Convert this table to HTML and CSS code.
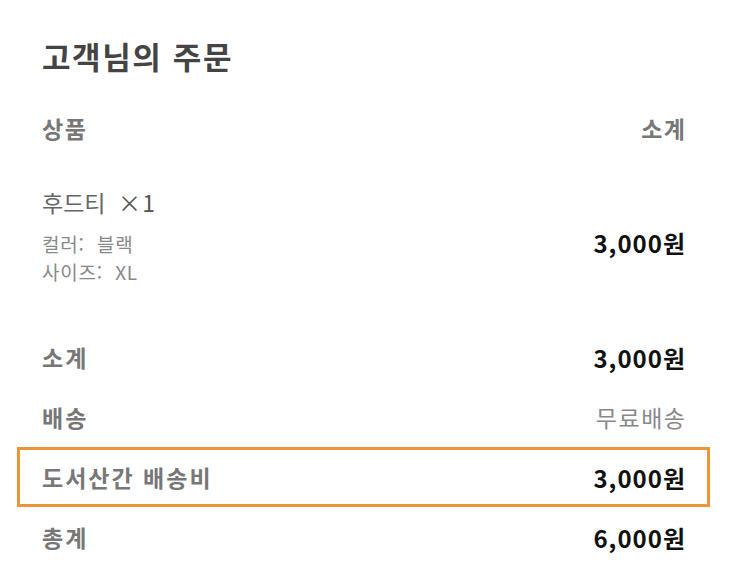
FILE: index.html
```html
<!DOCTYPE html>
<html lang="ko">
<head>
<meta charset="utf-8">
<title>고객님의 주문</title>
<link rel="stylesheet" href="styles.css">
</head>
<body>
<section class="order">
  <h1 class="order-title">고객님의 주문</h1>
  <div class="order-head">
    <span>상품</span>
    <span class="trail">소계</span>
  </div>
  <div class="order-item">
    <div class="item-info">
      <div class="item-name">후드티 <span class="item-qty">×&#8202;1</span></div>
      <div class="item-opts">
        <div>컬러:&nbsp; 블랙</div>
        <div>사이즈:&nbsp; XL</div>
      </div>
    </div>
    <div class="item-price trail-num">3,000원</div>
  </div>
  <div class="sum-row">
    <span class="sum-label">소계</span>
    <span class="sum-value trail-num">3,000원</span>
  </div>
  <div class="sum-row">
    <span class="sum-label">배송</span>
    <span class="sum-value sum-value--muted trail">무료배송</span>
  </div>
  <div class="sum-row sum-row--highlight">
    <span class="sum-label">도서산간 배송비</span>
    <span class="sum-value trail-num">3,000원</span>
  </div>
  <div class="sum-row">
    <span class="sum-label">총계</span>
    <span class="sum-value trail-num">6,000원</span>
  </div>
</section>
</body>
</html>
```
FILE: styles.css
```css
html, body {
  margin: 0;
  padding: 0;
  background: #ffffff;
}

body {
  font-family: "Noto Sans CJK KR", "Noto Sans", sans-serif;
}

.order {
  padding: 36px 45px 0 42px;
}

.order-title {
  margin: 0;
  font-size: 31px;
  line-height: 40px;
  font-weight: 700;
  letter-spacing: 1.6px;
  color: #444444;
}

.order-head {
  display: flex;
  justify-content: space-between;
  margin-top: 32px;
  height: 40px;
  align-items: center;
  font-size: 23px;
  font-weight: 700;
  letter-spacing: 1.5px;
  color: #777777;
}

.trail {
  margin-right: -1.5px;
}

.trail-num {
  margin-right: -1px;
}

.order-item {
  display: flex;
  justify-content: space-between;
  align-items: center;
  margin-top: 39px;
}

.item-name {
  font-size: 23px;
  line-height: 30px;
  color: #666666;
}

.item-qty {
  margin-left: 6px;
  color: #555555;
}

.item-opts {
  margin-top: 13px;
  font-size: 19px;
  line-height: 28px;
  letter-spacing: 0.8px;
  color: #888888;
}

.item-price {
  padding-top: 11px;
  font-size: 24px;
  font-weight: 700;
  letter-spacing: 1px;
  color: #111111;
}

.sum-row {
  display: flex;
  justify-content: space-between;
  align-items: center;
  height: 60px;
  font-size: 23px;
}

.order-item + .sum-row {
  margin-top: 41px;
}

.sum-label {
  font-weight: 700;
  letter-spacing: 2px;
  color: #777777;
}

.sum-value {
  font-size: 24px;
  font-weight: 700;
  letter-spacing: 1px;
  color: #111111;
}

.sum-value--muted {
  font-size: 23px;
  font-weight: 400;
  letter-spacing: 1.5px;
  color: #888888;
}

.sum-row--highlight {
  box-sizing: border-box;
  margin: 0 -25px;
  padding: 0 22px;
  border: 3px solid #ef9538;
}
```
